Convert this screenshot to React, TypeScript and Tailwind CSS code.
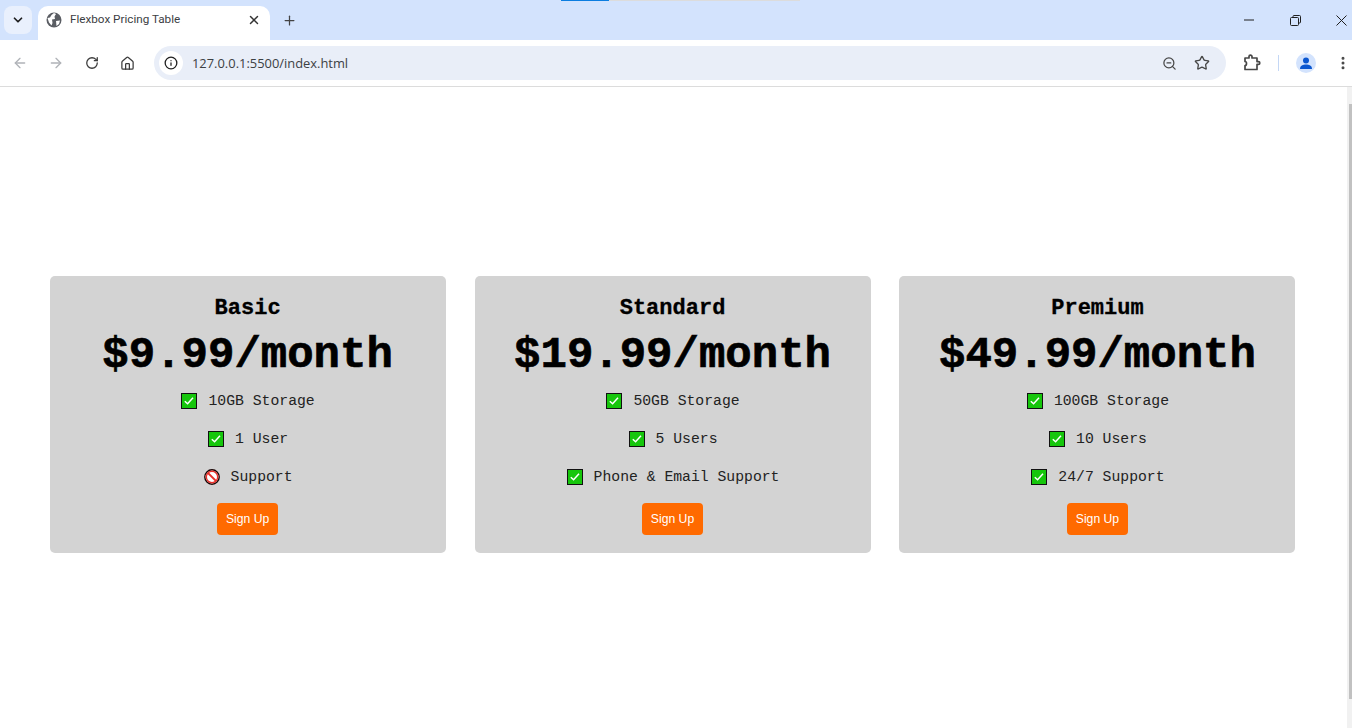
import React from 'react';
import { ChevronDown, X, Plus, ArrowLeft, ArrowRight, RotateCw, Home, Info, ZoomOut, Star, EllipsisVertical } from 'lucide-react';

const plans = [
  {
    name: 'Basic',
    price: '$9.99/month',
    features: [
      { ok: true, text: '10GB Storage' },
      { ok: true, text: '1 User' },
      { ok: false, text: 'Support' },
    ],
  },
  {
    name: 'Standard',
    price: '$19.99/month',
    features: [
      { ok: true, text: '50GB Storage' },
      { ok: true, text: '5 Users' },
      { ok: true, text: 'Phone & Email Support' },
    ],
  },
  {
    name: 'Premium',
    price: '$49.99/month',
    features: [
      { ok: true, text: '100GB Storage' },
      { ok: true, text: '10 Users' },
      { ok: true, text: '24/7 Support' },
    ],
  },
];

const CheckBox = () => (
  <svg width="16" height="16" viewBox="0 0 16 16" className="shrink-0">
    <rect x="0.5" y="0.5" width="15" height="15" fill="#16c60c" stroke="#111" />
    <path d="M3.8 8.2 L6.6 10.8 L12 4.8" fill="none" stroke="#fff" strokeWidth="1.5" />
  </svg>
);

const Prohibited = () => (
  <svg width="16" height="16" viewBox="0 0 16 16" className="shrink-0">
    <circle cx="8" cy="8" r="7.2" fill="#fff" stroke="#1a0505" strokeWidth="1.4" />
    <circle cx="8" cy="8" r="5.7" fill="none" stroke="#e8302a" strokeWidth="1.4" />
    <path d="M4 4 L12 12" stroke="#e8302a" strokeWidth="1.8" />
  </svg>
);

const Globe = () => (
  <svg width="16" height="16" viewBox="0 0 16 16" className="shrink-0">
    <circle cx="8" cy="8" r="7.5" fill="#5a5d63" />
    <path d="M1.5 6 L4 5.5 L5.5 3 L8 1 L10 2 L8.5 4.5 L9 7 L6 7.5 L6.5 11 L5.5 13.5 L3 10.5 Z" fill="#fff" />
    <path d="M10 9 L14 8.5 L13 12 L10.5 14 Z" fill="#fff" />
  </svg>
);

const Extension = () => (
  <svg width="18" height="18" viewBox="0 0 18 18" fill="none" stroke="#474747" strokeWidth="1.7" strokeLinejoin="round" className="ml-[17px] shrink-0">
    <path d="M2 4 H6 V2.6 A1.4 1.4 0 0 1 9 2.6 V4 H14 V7.6 H15.4 A1.4 1.4 0 0 1 15.4 10.4 H14 V15.5 H2 V11.5 C4 11.5 4 7.5 2 7.5 Z" />
  </svg>
);

const PlanCard = ({ plan }: { plan: (typeof plans)[number] }) => (
  <div className="w-[396px] h-[277px] shrink-0 rounded-[5px] bg-[#d3d3d3] flex flex-col items-center pt-[20px] text-black font-['Liberation_Mono',monospace]">
    <h2 className="text-[22px] leading-[25px] font-bold [-webkit-text-stroke:0.3px_black]">{plan.name}</h2>
    <p className="text-[44px] leading-[50px] font-bold mt-[9px] [-webkit-text-stroke:0.7px_black]">{plan.price}</p>
    <ul className="flex flex-col items-center mt-[2px]">
      {plan.features.map((f) => (
        <li key={f.text} className="h-[38px] flex items-center gap-[11px] pl-[1px] text-[14.75px] text-[#222]">
          {f.ok ? <CheckBox /> : <Prohibited />}
          <span>{f.text}</span>
        </li>
      ))}
    </ul>
    <button className="mt-[7px] w-[61px] h-[32px] rounded-[4px] bg-[#ff6a00] text-white text-[12.2px] font-['Liberation_Sans',sans-serif]">
      Sign Up
    </button>
  </div>
);

export default function App() {
  return (
    <div className="w-[1352px] h-[728px] overflow-hidden flex flex-col bg-white font-['Roboto',sans-serif]">
      {/* tab strip */}
      <div className="relative h-[40px] bg-[#d3e3fd] flex items-end shrink-0">
        <div className="absolute top-0 left-[561px] w-[48px] h-[1px] bg-[#0b7de0]" />
        <div className="absolute top-0 left-[609px] w-[191px] h-[1px] bg-[#dcdcdc]" />
        <div className="w-[28px] h-[28px] ml-[4px] mb-[6px] rounded-[8px] bg-[#e9f0fd] flex items-center justify-center text-[#1f1f1f]">
          <ChevronDown size={14} strokeWidth={3} />
        </div>
        <div className="w-[232px] h-[34px] ml-[6px] bg-white rounded-t-[10px] flex items-center pl-[8px] pr-[9px] pb-[6px]">
          <Globe />
          <span className="ml-[8px] text-[11.7px] text-[#3c4043] font-['Roboto',sans-serif] flex-1">Flexbox Pricing Table</span>
          <X size={14} strokeWidth={2.5} className="text-[#333]" />
        </div>
        <div className="ml-[12px] mb-[12px] text-[#444]"><Plus size={15} strokeWidth={2} /></div>
        <div className="ml-auto h-full flex items-center text-[#1f1f1f]">
          <div className="w-[46px] flex justify-center">
            <svg width="10" height="2" viewBox="0 0 10 2" stroke="#1f1f1f"><path d="M0 1 H10" /></svg>
          </div>
          <div className="w-[46px] mr-[12px] flex justify-center">
            <svg width="11" height="11" viewBox="0 0 11 11" fill="none" stroke="#1f1f1f">
              <rect x="0.5" y="2.5" width="8" height="8" rx="1" />
              <path d="M3 2.5 V1.5 A1 1 0 0 1 4 0.5 H9.5 A1 1 0 0 1 10.5 1.5 V7 A1 1 0 0 1 9.5 8 H8.5" />
            </svg>
          </div>
          <div className="w-[22px] flex justify-center">
            <svg width="11" height="11" viewBox="0 0 11 11" fill="none" stroke="#1f1f1f"><path d="M0.5 0.5 L10.5 10.5 M10.5 0.5 L0.5 10.5" /></svg>
          </div>
        </div>
      </div>
      {/* toolbar */}
      <div className="h-[47px] bg-white border-b border-[#dcdcdc] flex items-center shrink-0 text-[#474747]">
        <ArrowLeft size={16} className="ml-[12px] text-[#b0b3b8]" />
        <ArrowRight size={16} className="ml-[20px] text-[#b0b3b8]" />
        <RotateCw size={14} strokeWidth={2.2} className="ml-[21px] text-[#3c3c3c]" />
        <Home size={15} strokeWidth={2} className="ml-[21px] text-[#3c3c3c]" />
        <div className="ml-[19px] w-[1072px] h-[34px] rounded-full bg-[#e9eef8] flex items-center pl-[5px] pr-[16px]">
          <div className="w-[24px] h-[24px] rounded-full bg-white flex items-center justify-center">
            <Info size={14} strokeWidth={2.2} className="text-[#1f1f1f]" />
          </div>
          <span className="ml-[9px] pt-[1px] text-[12.9px] text-[#3c4043] font-['Open_Sans',sans-serif] flex-1">127.0.0.1:5500/index.html</span>
          <ZoomOut size={15} className="text-[#474747]" />
          <Star size={16} strokeWidth={2} className="ml-[17px] text-[#474747]" />
        </div>
        <Extension />
        <div className="ml-[17px] w-[1px] h-[16px] bg-[#c4d7f5]" />
        <div className="ml-[17px] w-[20px] h-[20px] rounded-full bg-[#d3e3fd] overflow-hidden flex items-center justify-center">
          <svg width="14" height="14" viewBox="0 0 14 14" fill="#0b57d0">
            <circle cx="7" cy="4.5" r="3" />
            <path d="M1 13 C1 9.5 4 8.5 7 8.5 C10 8.5 13 9.5 13 13 Z" />
          </svg>
        </div>
        <EllipsisVertical size={16} strokeWidth={2.5} className="ml-[19px] text-[#474747]" />
      </div>
      {/* page */}
      <div className="flex-1 flex">
        <main className="flex-1 flex items-start gap-[28.95px] pl-[49.6px] pt-[189px]">
          {plans.map((p) => <PlanCard key={p.name} plan={p} />)}
        </main>
        <div className="w-[5px] flex flex-col items-end bg-[#f1f1f1]">
          <div className="w-[3px] h-[595px] mt-[17px] bg-[#c1c1c1]" />
        </div>
      </div>
    </div>
  );
}
